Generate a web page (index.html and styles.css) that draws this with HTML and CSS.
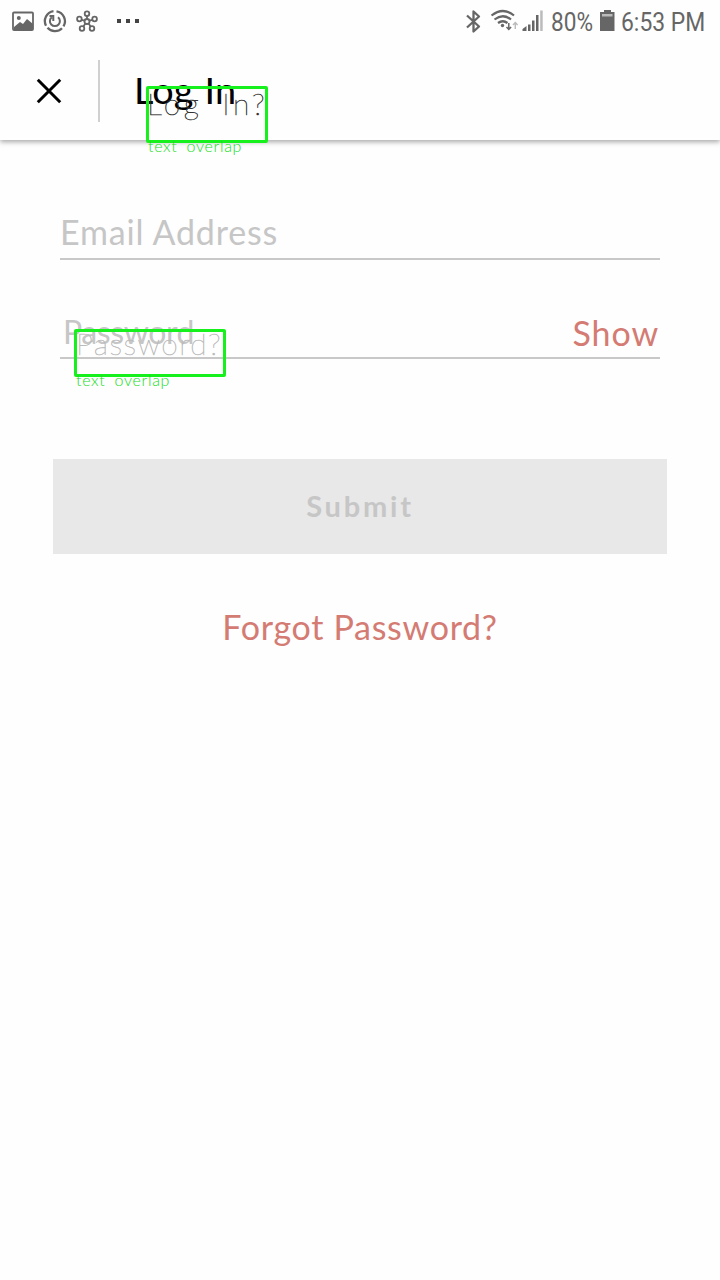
FILE: index.html
```html
<!DOCTYPE html>
<html lang="en">
<head>
<meta charset="utf-8">
<title>Log In</title>
<link rel="stylesheet" href="styles.css">
</head>
<body>
<div class="status">
  <svg class="status-left" width="150" height="42" viewBox="0 0 150 42" fill="none" stroke="#666">
    <rect x="13" y="12.5" width="20" height="17.5" rx="1" stroke-width="1.8"/>
    <circle cx="18.8" cy="18" r="2" fill="#666" stroke="none"/>
    <path d="M14 27l6-5 3 2 4-5 6 5v5H14z" fill="#666" stroke="none"/>
    <path d="M53.500 11.200a10 10 0 0 0-7.500 14.500M47.500 27.700a10 10 0 0 0 14.500 0.500M63.500 26.300a10 10 0 0 0-7-15" stroke-width="2.300"/>
    <path d="M58 17.200a5 5 0 1 1-6.200 0M49.500 16h3.800v5" stroke-width="2"/>
    <g stroke-width="1.8">
      <circle cx="87" cy="21.5" r="2.5"/>
      <circle cx="87" cy="13.7" r="2.3"/><circle cx="79.4" cy="19" r="2.3"/><circle cx="94.6" cy="19" r="2.3"/><circle cx="82" cy="28.5" r="2.3"/><circle cx="92" cy="28.5" r="2.3"/>
      <path d="M87 16v3M81.7 19.8l2.8.9M92.3 19.8l-2.8.9M83.4 26.6l2-3M90.6 26.6l-2-3"/>
    </g>
    <path d="M117 19h4v4h-4zM126 19h4v4h-4zM135 19h4v4h-4z" fill="#444" stroke="none"/>
  </svg>
  <svg class="status-right" width="85" height="42" viewBox="460 0 85 42" fill="none" stroke="#666">
    <path d="M467 15.500l12 11-5.500 5V11.500l5.500 5-12 11" stroke-width="2.300" stroke-linejoin="round"/>
    <path d="M491.5 15.5q11.5-9 22.500 0M494.500 19.500q8.500-6.500 16.500 0M498 23q4.800-3.500 9.500 0" stroke-width="2.200"/>
    <circle cx="502.500" cy="25.500" r="1.700" fill="#666" stroke="none"/>
    <path d="M508.800 23v6M506.500 27l2.300 2.500 2.300-2.500" stroke-width="1.500"/>
    <path d="M515.300 29v-6M513 25l2.300-2.500 2.300 2.500" stroke-width="1.400" stroke="#bbb"/>
    <path d="M522.500 31v-2l4-3v5zM528 24.500h2.500V31H528zM532 20.500h2.500V31H532zM536 15h2.500v16H536z" fill="#666" stroke="none"/>
    <path d="M540.200 10.500h2.500V31h-2.500z" fill="#bbb" stroke="none"/>
  </svg>
  <span class="percent">80%</span>
  <svg class="battery" width="16" height="42" viewBox="0 0 16 42"><path d="M4 10h7v2h3.500v19H0V12h4z" fill="#666"/><path d="M2 14h10.500v2.500H2z" fill="#bbb"/></svg>
  <span class="clock">6:53 PM</span>
</div>
<header class="bar">
  <svg class="close" width="26" height="26" viewBox="0 0 26 26"><path d="M1.800 1.800l22.400 22.400M24.200 1.800L1.800 24.200" stroke="#000" stroke-width="3"/></svg>
  <i class="divider"></i>
  <h1 class="title">Log In</h1>
</header>
<main class="form">
  <div class="field email"><span class="placeholder">Email Address</span></div>
  <div class="field password"><span class="placeholder">Password</span><a class="show">Show</a></div>
  <button class="submit">Submit</button>
  <a class="forgot">Forgot Password?</a>
</main>
<div class="mark mark-title"><span class="ghost">Log In?</span><span class="note">text overlap</span></div>
<div class="mark mark-password"><span class="ghost">Password?</span><span class="note">text overlap</span></div>
</body>
</html>
```
FILE: styles.css
```css
* { box-sizing: border-box; }
body { margin: 0; width: 720px; height: 1280px; overflow: hidden; position: relative; background: #fefefe; font-family: Lato, "Liberation Sans", sans-serif; }
svg { display: block; flex: none; }
.status { position: relative; z-index: 1; height: 42px; display: flex; font: 26px/42px Roboto, sans-serif; color: #666; white-space: nowrap; background: #fefefe; }
.status-right { margin-left: 310px; }
.percent { width: 48px; margin-left: 6px; padding-top: 1px; transform: scaleX(.87); transform-origin: left; }
.battery { margin-left: 1px; }
.clock { margin-left: 5px; padding-top: 1px; transform: scaleX(.88); transform-origin: left; }
.bar { height: 98px; display: flex; padding-left: 36px; box-shadow: 0 2px 5px rgba(0,0,0,.34); }
.close { margin-top: 36px; }
.divider { width: 2px; height: 62px; margin: 18px 0 0 36px; background: #d0d0d0; }
.title { margin: 24px 0 0 34px; font-size: 36px; line-height: 48px; font-weight: 400; letter-spacing: .2px; word-spacing: 1px; color: #000; transform: scaleX(1.05); transform-origin: left; }
.form { display: flex; flex-direction: column; padding: 70px 60px 0; }
.field { display: flex; justify-content: space-between; border-bottom: 2px solid #c8c8c8; font-size: 34px; line-height: 44px; color: #c6c6c6; }
.email { height: 50px; letter-spacing: .8px; }
.password { height: 50px; margin-top: 49px; }
.password .placeholder { padding: 1px 0 0 3px; font-size: 32px; letter-spacing: -.4px; }
.show { color: #d47b73; padding: 2px 1px 0 0; letter-spacing: .9px; }
.submit { height: 95px; margin: 100px -7px 0; border: 0; padding: 0 0 2px; background: #e8e8e8; color: #c6c6c6; font: 700 29px/93px Lato, sans-serif; letter-spacing: 2.8px; }
.forgot { margin-top: 51px; text-align: center; font-size: 34px; line-height: 44px; letter-spacing: .7px; color: #d47b73; }
.mark { position: absolute; border: 3px solid #16f01c; border-radius: 2px; white-space: nowrap; }
.mark-title { left: 146px; top: 86px; width: 122px; height: 57px; }
.mark-password { left: 74px; top: 329px; width: 152px; height: 48px; }
.ghost { position: absolute; left: -2px; top: -4px; font-size: 30px; line-height: 36px; font-weight: 100; letter-spacing: 3.5px; word-spacing: 8px; color: #222; -webkit-text-stroke: .5px #333; }
.mark-password .ghost { left: -1px; top: -7px; letter-spacing: 1.5px; color: #b8b8b8; -webkit-text-stroke: .5px #bbb; }
.note { position: absolute; left: -1px; top: 47px; font-size: 16px; line-height: 20px; font-weight: 300; color: #16dc1c; word-spacing: 4px; letter-spacing: .7px; }
.mark-password .note { top: 38px; }
```
